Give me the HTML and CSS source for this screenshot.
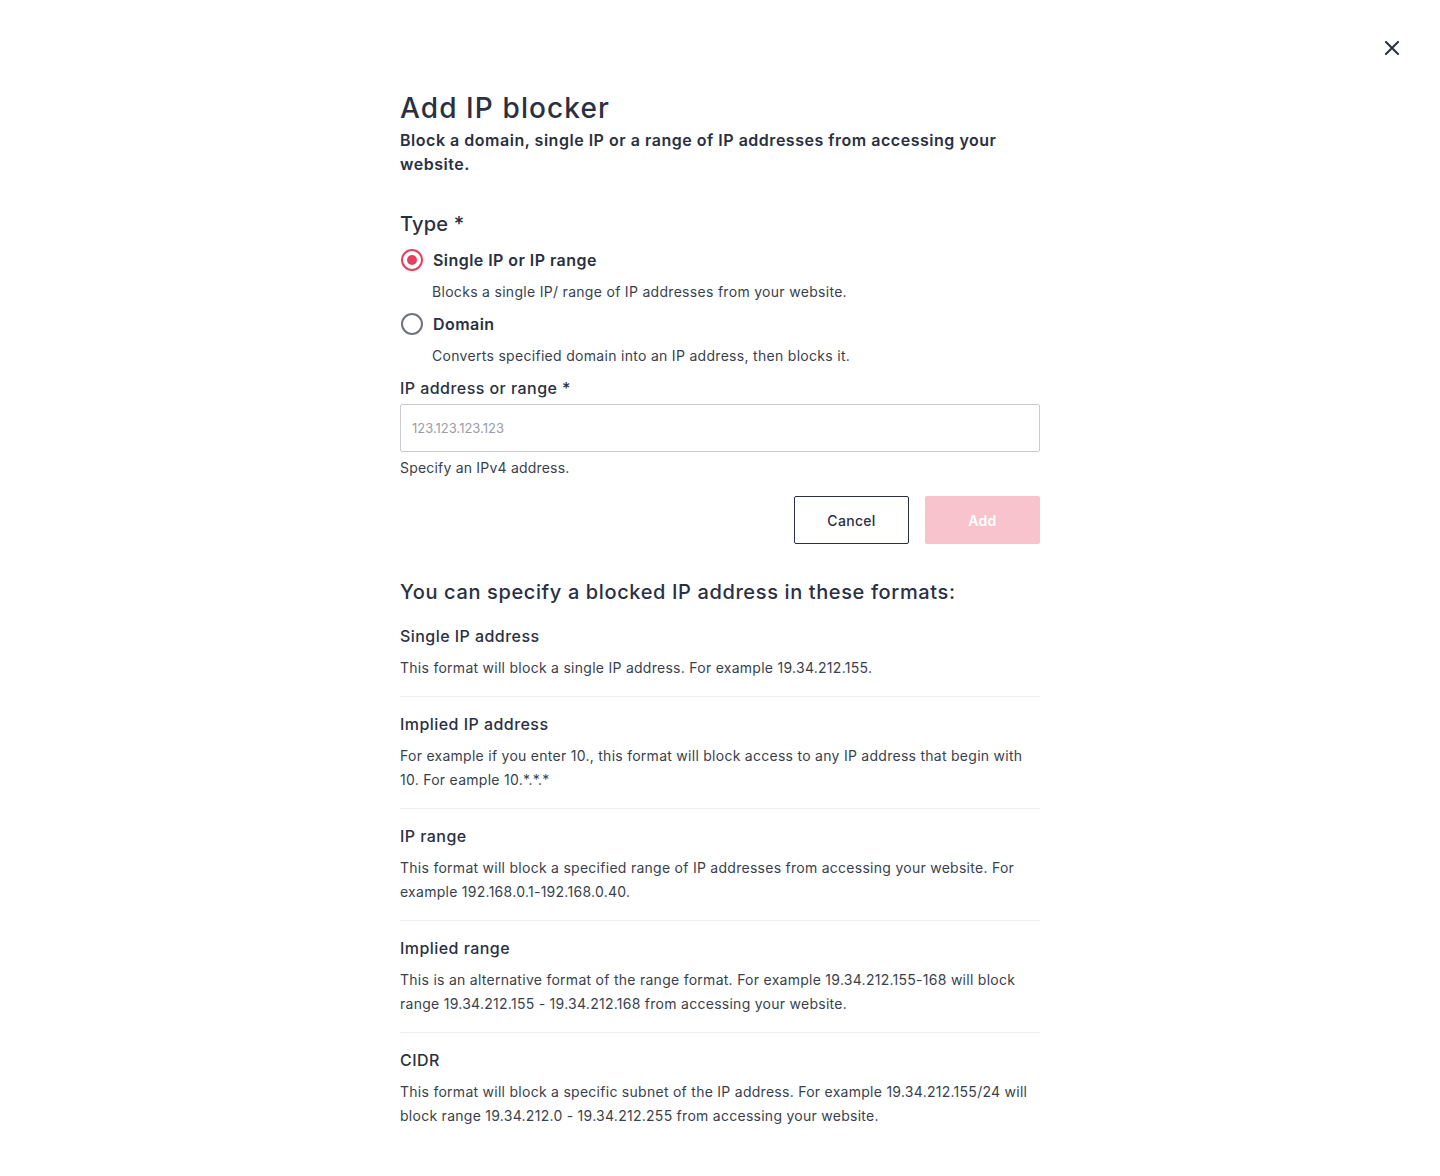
FILE: index.html
```html
<!DOCTYPE html>
<html lang="en">
<head>
<meta charset="utf-8">
<title>Add IP blocker</title>
<link rel="stylesheet" href="styles.css">
</head>
<body>
<div class="page">
  <button class="close" aria-label="Close">
    <svg width="14" height="14" viewBox="0 0 14 14"><path d="M1 1L13 13M13 1L1 13" stroke="#2b3040" stroke-width="2" stroke-linecap="square"/></svg>
  </button>
  <main class="dialog">
    <h1 class="title">Add IP blocker</h1>
    <p class="subtitle">Block a domain, single IP or a range of IP addresses from accessing your website.</p>

    <h2 class="type-label">Type *</h2>
    <div class="options">
      <label class="option">
        <span class="radio checked"></span>
        <span class="option-title">Single IP or IP range</span>
      </label>
      <p class="option-desc">Blocks a single IP/ range of IP addresses from your website.</p>
      <label class="option">
        <span class="radio"></span>
        <span class="option-title">Domain</span>
      </label>
      <p class="option-desc">Converts specified domain into an IP address, then blocks it.</p>
    </div>

    <div class="field">
      <label class="field-label">IP address or range *</label>
      <div class="input"><span class="placeholder">123.123.123.123</span></div>
      <p class="helper">Specify an IPv4 address.</p>
    </div>

    <div class="actions">
      <button class="btn btn-cancel">Cancel</button>
      <button class="btn btn-add">Add</button>
    </div>

    <h2 class="formats-title">You can specify a blocked IP address in these formats:</h2>
    <div class="formats">
      <section class="format">
        <h3>Single IP address</h3>
        <p>This format will block a single IP address. For example 19.34.212.155.</p>
      </section>
      <section class="format">
        <h3>Implied IP address</h3>
        <p>For example if you enter 10., this format will block access to any IP address that begin with 10. For eample 10.*.*.*</p>
      </section>
      <section class="format">
        <h3>IP range</h3>
        <p>This format will block a specified range of IP addresses from accessing your website. For example 192.168.0.1-192.168.0.40.</p>
      </section>
      <section class="format">
        <h3>Implied range</h3>
        <p>This is an alternative format of the range format. For example 19.34.212.155-168 will block range 19.34.212.155 - 19.34.212.168 from accessing your website.</p>
      </section>
      <section class="format">
        <h3>CIDR</h3>
        <p>This format will block a specific subnet of the IP address. For example 19.34.212.155/24 will block range 19.34.212.0 - 19.34.212.255 from accessing your website.</p>
      </section>
    </div>
  </main>
</div>
</body>
</html>
```
FILE: styles.css
```css
* { box-sizing: border-box; }
html, body { margin: 0; padding: 0; background: #fff; }
body {
  font-family: "Inter", "DejaVu Sans", sans-serif;
  color: #2a3042;
}
.page {
  position: relative;
  min-height: 1176px;
  display: flex;
  justify-content: center;
}
.close {
  position: absolute;
  top: 41px;
  left: 1385px;
  width: 14px;
  height: 14px;
  padding: 0;
  border: 0;
  background: none;
  display: flex;
}
.dialog {
  width: 640px;
  padding-top: 90px;
}
.title {
  margin: 0;
  font-size: 28px;
  line-height: 36px;
  font-weight: 500;
  letter-spacing: 1.1px;
  color: #2a3042;
}
.subtitle {
  margin: 2px 0 0;
  font-size: 16px;
  line-height: 24px;
  font-weight: 600;
  letter-spacing: 0.52px;
  color: #2a3042;
}
.type-label {
  margin: 34px 0 0;
  font-size: 20px;
  line-height: 28px;
  font-weight: 500;
  letter-spacing: 0.2px;
}
.options { margin-top: 10px; }
.option {
  display: flex;
  align-items: center;
  gap: 10px;
  height: 24px;
}
.radio {
  width: 22px;
  height: 22px;
  border: 2px solid #6f737d;
  border-radius: 50%;
  display: flex;
  align-items: center;
  justify-content: center;
  margin-left: 1px;
}
.radio.checked { border-color: #e5405e; }
.radio.checked::after {
  content: "";
  width: 10px;
  height: 10px;
  border-radius: 50%;
  background: #e5405e;
}
.option-title {
  font-size: 16px;
  font-weight: 600;
  line-height: 24px;
  letter-spacing: 0.45px;
}
.option-desc {
  margin: 8px 0 8px 32px;
  font-size: 14px;
  line-height: 24px;
  letter-spacing: 0.3px;
  color: #3a3f4d;
}
.field-label {
  display: block;
  font-size: 16px;
  font-weight: 500;
  line-height: 24px;
  letter-spacing: 0.45px;
}
.input {
  margin-top: 4px;
  height: 48px;
  border: 1px solid #c9cbd1;
  border-radius: 2px;
  display: flex;
  align-items: center;
  padding: 0 11px;
}
.placeholder {
  font-size: 13px;
  color: #9a9da6;
}
.helper {
  margin: 4px 0 0;
  font-size: 14px;
  line-height: 24px;
  letter-spacing: 0.2px;
  color: #3a3f4d;
}
.actions {
  display: flex;
  justify-content: flex-end;
  gap: 16px;
  margin-top: 16px;
}
.btn {
  width: 115px;
  height: 48px;
  border-radius: 2px;
  font-family: inherit;
  font-size: 14px;
  font-weight: 500;
  letter-spacing: 0.3px;
}
.btn-cancel {
  background: #fff;
  border: 1px solid #2a3042;
  color: #2a3042;
}
.btn-add {
  background: #f8c3cd;
  border: 0;
  color: #fff;
  font-weight: 600;
}
.formats-title {
  margin: 34px 0 0;
  font-size: 20px;
  line-height: 28px;
  font-weight: 500;
  letter-spacing: 0.62px;
}
.formats { margin-top: 18px; }
.format {
  padding-top: 15px;
  padding-bottom: 16px;
  border-bottom: 1px solid #ececee;
}
.format:first-child { padding-top: 0; }
.format:last-child { border-bottom: 0; }
.format h3 {
  margin: 0;
  font-size: 16px;
  line-height: 24px;
  font-weight: 500;
  letter-spacing: 0.45px;
}
.format p {
  margin: 8px 0 0;
  font-size: 14px;
  line-height: 24px;
  letter-spacing: 0.27px;
  color: #3a3f4d;
}
```
